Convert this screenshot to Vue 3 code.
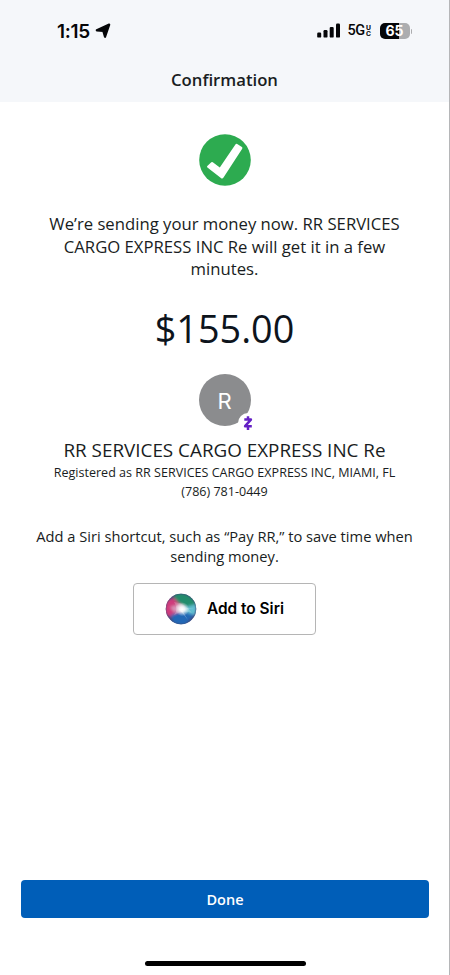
<script setup>
const title = 'Confirmation'
const messageLines = [
  'We’re sending your money now. RR SERVICES',
  'CARGO EXPRESS INC Re will get it in a few',
  'minutes.',
]
const siriLines = ['Add a Siri shortcut, such as “Pay RR,” to save time when', 'sending money.']
</script>

<template>
  <div class="screen">
    <header class="top">
      <div class="status">
        <div class="clock">
          <span class="time">1:15</span>
          <svg class="arrow" width="16" height="16" viewBox="0 0 16 16">
            <path d="M14.2 1.6 10 13.8 8.3 8 1.8 7.3Z" fill="#050608" stroke="#050608" stroke-width="2.2" stroke-linejoin="round" />
          </svg>
        </div>
        <div class="radios">
          <svg class="signal" width="24" height="16" viewBox="0 0 24 16">
            <rect x="0.2" y="9.6" width="4" height="5" rx="1.2" />
            <rect x="6.5" y="7.1" width="4" height="7.5" rx="1.2" />
            <rect x="12.7" y="3.9" width="4" height="10.7" rx="1.2" />
            <rect x="19" y="0.6" width="4" height="14" rx="1.2" />
          </svg>
          <span class="network">5G</span>
          <span class="uc"><span>U</span><span>C</span></span>
          <div class="battery"><span>65</span></div>
          <i class="cap"></i>
        </div>
      </div>
      <h1>{{ title }}</h1>
    </header>

    <main>
      <svg class="check" width="52" height="52" viewBox="0 0 52 52">
        <circle cx="26" cy="26" r="25.8" fill="#2dab50" />
        <path d="M8.3 32 12.3 28.2Q13 27.6 13.8 28.2L20.8 33.6 36.4 10.4Q37.2 9.4 38.2 10L42.9 13Q43.8 13.7 43.2 14.7L24.5 43.6Q23.4 45.2 21.9 44L8.4 33.4Q7.6 32.7 8.3 32Z" fill="#fff" />
      </svg>

      <p class="message"><span v-for="line in messageLines" :key="line">{{ line }}</span></p>
      <p class="amount">$155.00</p>

      <div class="avatar">
        <span>R</span>
        <svg class="badge" width="20" height="20" viewBox="0 0 20 20">
          <circle cx="10" cy="10" r="10" fill="#fff" />
          <path d="M6.3 6.6H12.9L7.1 13.2H13.8M10 3.3V6.3M10 13.7V16.9" fill="none" stroke="#6420c5" stroke-width="2.5" stroke-linejoin="round" />
        </svg>
      </div>

      <h2>RR SERVICES CARGO EXPRESS INC Re</h2>
      <p class="detail registered">Registered as RR SERVICES CARGO EXPRESS INC, MIAMI, FL</p>
      <p class="detail phone">(786) 781-0449</p>

      <p class="hint"><span v-for="line in siriLines" :key="line">{{ line }}</span></p>

      <button class="siri">
        <svg width="32" height="32" viewBox="0 0 32 32">
          <defs>
            <clipPath id="orb"><circle cx="16" cy="16" r="15.2" /></clipPath>
            <filter id="soft" x="-30%" y="-30%" width="160%" height="160%"><feGaussianBlur stdDeviation="1.6" /></filter>
            <radialGradient id="glow">
              <stop offset="0" stop-color="#fff" />
              <stop offset="0.35" stop-color="#fff" stop-opacity="0.85" />
              <stop offset="1" stop-color="#fff" stop-opacity="0" />
            </radialGradient>
          </defs>
          <g clip-path="url(#orb)">
            <rect width="32" height="32" fill="#44447c" />
            <g filter="url(#soft)">
              <path d="M9 1Q22 -3 31 9L30 15 17 13 9 6Z" fill="#218c6c" />
              <path d="M0 7 9 5 17 14 12 21 4 24-2 20Z" fill="#cf3b7c" />
              <path d="M17 15 32 11 31 22 19 22Z" fill="#62bfd2" />
              <path d="M6 22 18 18 29 22 20 33 8 31Z" fill="#2068b6" />
              <path d="M5 14 16 11 18 16 10 20Z" fill="#d795b9" />
            </g>
            <path d="M9 9Q20 10 27 20Q18 16 9 22Q14 16 9 9Z" fill="#fff" opacity=".2" />
            <path d="M14 16 23 27 17 17 29 15Z" fill="#fff" opacity=".3" />
            <circle cx="17.2" cy="16.2" r="7" fill="url(#glow)" />
          </g>
          <circle cx="16" cy="16" r="14.8" fill="none" stroke="#3d557b" stroke-width=".7" opacity=".5" />
        </svg>
        <span>Add to Siri</span>
      </button>
    </main>

    <footer>
      <button class="done">Done</button>
      <div class="home"></div>
    </footer>
  </div>
</template>

<style>
body {
  margin: 0;
  background: #fff;
}
</style>

<style scoped>
* {
  box-sizing: border-box;
}
.screen {
  width: 450px;
  height: 975px;
  display: flex;
  flex-direction: column;
  background: #fff;
  border-right: 1px solid #b5b6b8;
  color: #191d22;
  font-family: 'Open Sans', sans-serif;
  overflow: hidden;
}
h1, h2, p {
  margin: 0;
  font-weight: 400;
  white-space: nowrap;
}
.top {
  height: 102px;
  background: #f5f7fa;
}
.status {
  height: 62px;
  padding: 0 37px 0 57px;
  display: flex;
  justify-content: space-between;
  align-items: center;
  font-family: Inter, sans-serif;
  color: #050608;
}
.clock, .radios {
  display: flex;
  align-items: center;
}
.time {
  width: 35px;
  font-size: 19px;
  font-weight: 600;
  letter-spacing: -0.3px;
  white-space: nowrap;
}
.arrow {
  margin-left: 3px;
}
.signal {
  fill: #050608;
}
.network {
  width: 18px;
  margin-left: 7px;
  font-family: Roboto, sans-serif;
  font-size: 14.5px;
  line-height: 16px;
  font-weight: 500;
  letter-spacing: -0.5px;
}
.uc {
  width: 6px;
  display: flex;
  flex-direction: column;
  align-items: center;
  font-family: Roboto, sans-serif;
  font-size: 7.5px;
  line-height: 6.5px;
  font-weight: 700;
}
.battery {
  width: 30px;
  height: 16px;
  margin-left: 8px;
  border-radius: 5px;
  background: linear-gradient(90deg, #050608 65%, #acadaf 65%);
  color: #fff;
  font-size: 14px;
  line-height: 16px;
  font-weight: 700;
  text-align: center;
}
.cap {
  width: 1.5px;
  height: 5px;
  margin-left: 1px;
  border-radius: 0 2px 2px 0;
  background: #acadaf;
}
h1 {
  font-size: 16.7px;
  line-height: 36px;
  font-weight: 600;
  text-align: center;
}
main {
  flex: 1;
  display: flex;
  flex-direction: column;
  align-items: center;
  padding-top: 32px;
}
.message {
  margin-top: 27px;
  font-size: 16.7px;
  line-height: 22.7px;
  text-align: center;
}
.message span, .hint span {
  display: block;
}
.amount {
  margin-top: 22px;
  font-size: 37.8px;
  line-height: 52px;
  color: #0d141c;
}
.avatar {
  position: relative;
  width: 52px;
  height: 52px;
  margin-top: 19px;
  border-radius: 50%;
  background: #8b8c8e;
  color: #fff;
  font-family: Inter, sans-serif;
  font-size: 22px;
  line-height: 54px;
  text-align: center;
}
.badge {
  position: absolute;
  left: 39px;
  top: 39px;
}
h2 {
  margin-top: 11px;
  font-size: 18.85px;
  line-height: 26px;
}
.detail {
  font-size: 12.55px;
  line-height: 18.5px;
}
.registered {
  margin-top: 1px;
}
.hint {
  margin-top: 24.5px;
  font-size: 14.68px;
  line-height: 20px;
  text-align: center;
}
.siri {
  width: 183px;
  height: 52px;
  margin-top: 17px;
  padding: 0;
  display: flex;
  align-items: center;
  justify-content: center;
  gap: 10px;
  border: 1.5px solid #b5b5b5;
  border-radius: 4px;
  background: #fff;
  color: #000;
  font: 600 15.4px Inter, sans-serif;
  white-space: nowrap;
}
footer {
  height: 95px;
  padding: 0 20px 0 21px;
  display: flex;
  flex-direction: column;
  align-items: center;
}
.done {
  width: 408px;
  height: 38px;
  border: 0;
  border-radius: 4px;
  background: #005eb8;
  color: #fff;
  font: 600 14.5px 'Open Sans', sans-serif;
}
.home {
  width: 161px;
  height: 5px;
  margin-top: 43px;
  border-radius: 3px;
  background: #000;
}
</style>
